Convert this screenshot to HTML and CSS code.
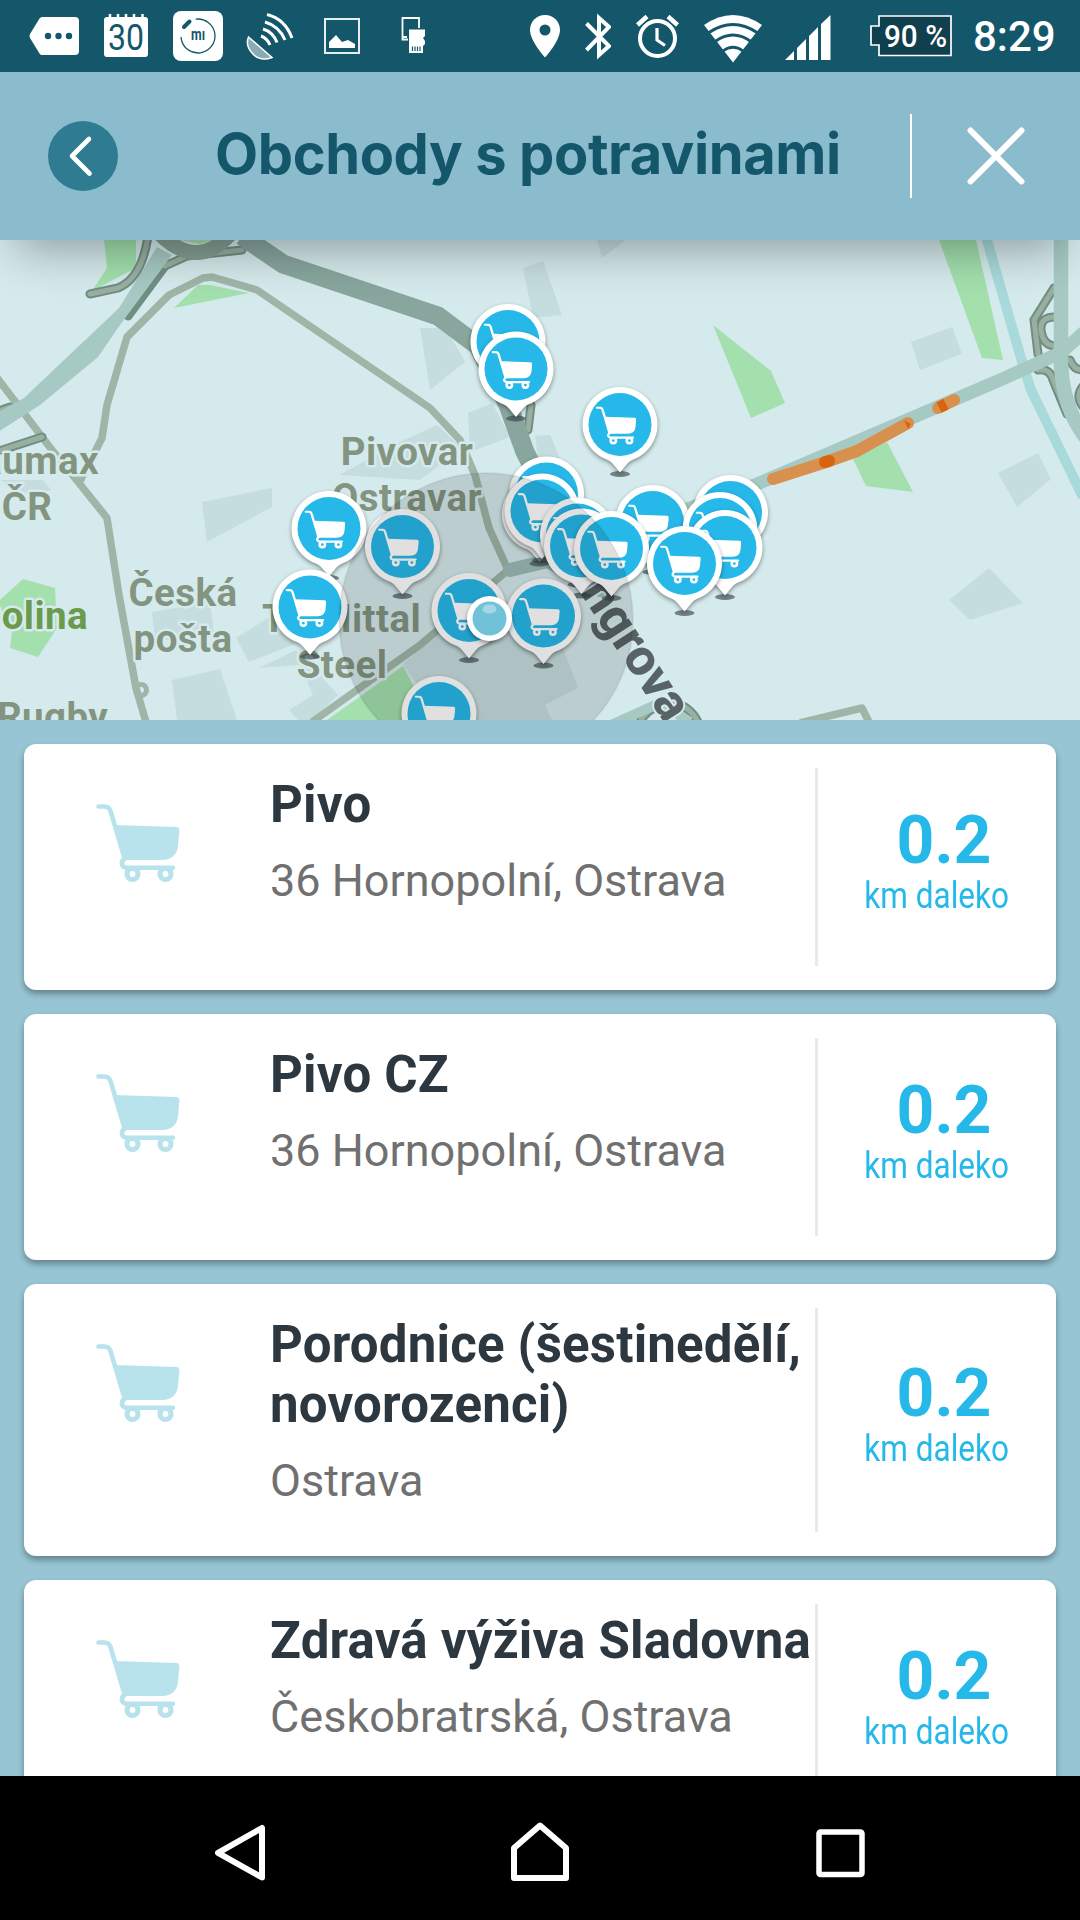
FILE: index.html
```html
<!DOCTYPE html>
<html lang="cs">
<head>
  <meta charset="UTF-8" />
  <title>Obchody s potravinami</title>
  <link rel="stylesheet" href="styles.css">
</head>
<body>

<!-- SHARED SHAPES -->
<svg class="defs" width="0" height="0">
  <defs>
    <symbol id="cart" viewBox="0 0 84 79">
      <path d="M2.5 2.5h6q4.500 0 6 4.500L28.500 54" fill="none" stroke="currentColor" stroke-width="4.600" stroke-linecap="round"/>
      <path d="M19 21L80 23q3.600.2 3.400 4L82 42q-1.500 13.500-16 14H28z" fill="currentColor"/>
      <path d="M29 54.500q-4.500 3-2.500 7 1.500 2.300 5 2.300H77" fill="none" stroke="currentColor" stroke-width="4.600" stroke-linecap="round"/>
      <circle cx="36.500" cy="70" r="5.500" fill="none" stroke="currentColor" stroke-width="5.200"/>
      <circle cx="69.500" cy="70" r="5.500" fill="none" stroke="currentColor" stroke-width="5.200"/>
    </symbol>
    <g id="pin">
      <ellipse cx="0" cy="49.500" rx="10" ry="3" fill="#3c4a50" opacity=".65"/>
      <path class="pin-body" d="M0 48L-7 39.500Q-9 36.800-12 35.500A37.500 37.500 0 1 1 12 35.500Q9 36.800 7 39.500Z" fill="#fff"/>
      <circle r="31.500" fill="#26b8e9"/>
      <use href="#cart" x="-24.500" y="-18" width="41" height="38.500" color="#fff"/>
    </g>
  </defs>
</svg>

<!-- STATUS BAR -->
<div class="status-bar">
  <div class="status-left">
    <svg width="50" height="72"><path d="M13 17H46q4 0 4 4V51q0 4-4 4H13q-1.500 0-2.500-1.600L1 38q-1-2 0-4L10.500 18.600Q11.500 17 13 17z" fill="#fff"/><g fill="#15576a"><circle cx="19" cy="36" r="3.200"/><circle cx="29.500" cy="36" r="3.200"/><circle cx="40" cy="36" r="3.200"/></g></svg>
    <svg width="44" height="72"><rect y="17" width="44" height="40" rx="3" fill="#fff"/><path d="M6 14v4M14 14v4M22 14v4M30 14v4M38.500 14v4" stroke="#fff" stroke-width="2.500"/><text class="cal-day" x="4" y="50" textLength="36" lengthAdjust="spacingAndGlyphs">30</text></svg>
    <svg width="50" height="72"><rect y="11" width="50" height="50" rx="8" fill="#fff"/><circle cx="25" cy="36" r="17" fill="none" stroke="#15576a" stroke-width="1.300" stroke-dasharray="81 12 8 6" transform="rotate(-98 25 36)"/><path d="M11 27L16.500 21.500" stroke="#15576a" stroke-width="4" stroke-linecap="round"/><text class="mi" x="18" y="40" textLength="14" lengthAdjust="spacingAndGlyphs">mı</text></svg>
    <svg width="48" height="72"><path d="M2.500 37L26 57.500Q14 62 6.500 53.500Q-1 46 2.500 37z" fill="#8aabb5" stroke="#fff" stroke-width="1.500"/><g fill="none" stroke="#fff" stroke-width="3"><path d="M15 36Q21 38 24 45"/><path d="M17 29Q27 32 31 42.500"/><path d="M19 22Q33 26 39 40"/><path d="M21 14.500Q39 19 46 38"/></g></svg>
    <svg width="36" height="72"><rect x="1" y="19" width="34" height="34" fill="none" stroke="#fff" stroke-width="1.800"/><path d="M5 48V42L12 35 18 42 24 40 31 44V48z" fill="#fff"/></svg>
    <svg width="26" height="72"><path d="M18 28V18H1.500V39.500H7M2 37H6" fill="none" stroke="#fff" stroke-width="1.800"/><path d="M8 29.500H24V36L22 38 24 41V44L22 46V53H8z" fill="#fff"/><path d="M11.500 46.500v4.500M14 46.500v4.500M16.500 46.500v4.500M19 46.500v4.500" stroke="#15576a" stroke-width="1.200"/></svg>
  </div>
  <div class="status-right">
    <svg width="30" height="72"><path d="M15 15C6 15 0 22 0 30C0 41 15 57.500 15 57.500S30 41 30 30C30 22 24 15 15 15z" fill="#fff"/><circle cx="15" cy="30" r="5.500" fill="#15576a"/></svg>
    <svg width="26" height="72"><path d="M1.500 23.500L24 46 14 55V18L24 27 1.500 50" fill="none" stroke="#fff" stroke-width="4"/></svg>
    <svg width="43" height="72"><circle cx="21.500" cy="38.500" r="17.500" fill="none" stroke="#fff" stroke-width="4"/><path d="M21 28V40L29 45.500" fill="none" stroke="#fff" stroke-width="3.200"/><path d="M1.500 25L11 16.500M41.500 25L32 16.500" stroke="#fff" stroke-width="4.400"/></svg>
    <svg width="58" height="72"><path d="M29 62.500L0 25Q29 5 58 25z" fill="#fff"/><g fill="none" stroke="#15576a" stroke-width="2.800"><path d="M5 32.500Q29 16.500 53 32.500"/><path d="M11 41.500Q29 28.500 47 41.500"/><path d="M19 51Q29 43.500 39 51"/></g></svg>
    <svg class="signal" width="46" height="72"><path d="M0 60L9 51V60zM12 60V48L21 39V60zM24 60V36L33 27V60zM36 60V24L45.500 15V60z" fill="#fff"/></svg>
    <svg class="battery" width="82" height="72"><path d="M9 16H81V55.500H9V45H1V26H9z" fill="#103f4d" stroke="#fff" stroke-width="1.700"/><text x="14" y="46.500" textLength="63" lengthAdjust="spacingAndGlyphs">90 %</text></svg>
    <span class="clock">8:29</span>
  </div>
</div>

<!-- HEADER -->
<div class="header">
  <div class="back-btn">
    <svg width="70" height="70"><path d="M41 18L24 35 41.500 52.500" fill="none" stroke="#fff" stroke-width="4.600" stroke-linecap="round" stroke-linejoin="round"/></svg>
  </div>
  <h1>Obchody s potravinami</h1>
  <div class="header-line"></div>
  <svg class="close-btn" width="58" height="58"><path d="M3.500 3.500L54.500 54.500M54.500 3.500L3.500 54.500" stroke="#fff" stroke-width="6" stroke-linecap="round"/></svg>
</div>

<!-- MAP -->
<svg class="map" width="1080" height="480" viewBox="0 0 1080 480">
  <g fill="#c6dddf">
    <path d="M523 28L543 21 562 75 533 78z"/>
    <path d="M420 88H446L465 122 430 150z"/>
    <path d="M468 173L492 163 510 197 470 212z"/>
    <path d="M339 235L400 202 437 185 462 208 420 240z"/>
    <path d="M202 262L272 248V267L207 302z"/>
    <path d="M0 240H43L51 250 30 255z"/>
    <path d="M152 372L210 362 214 392 180 402 155 398z"/>
    <path d="M236 398L268 378 300 402 249 422z"/>
    <path d="M259 428L296 410 338 455 312 480H298L289 470 313 455 300 425z"/>
    <path d="M172 440L220 429 237 480H177z"/>
    <path d="M403 424L440 392 520 360 560 400 578 448 545 465 552 480H440z"/>
    <path d="M597 0H626L602 18z"/>
    <path d="M911 102L952 87 962 114 920 130z"/>
    <path d="M998 233L1038 213 1051 239 1017 267z"/>
    <path d="M949 360L989 328 1023 363 970 380z"/>
    <path d="M535 196L550 195 560 218H538z"/>
  </g>
  <g fill="#a3e0ad">
    <path d="M104 0H136V28L92 51 107 28z"/>
    <path d="M178 0H212L200 4z"/>
    <path d="M198 45H210L249 53 174 68z"/>
    <path d="M23 339L55 348 57 388 38 417 10 408 12 392 0 382V360z"/>
    <path d="M327 480L403 426 413 445 450 480z"/>
    <path d="M713 85L771 131 785 163 751 178z"/>
    <path d="M939 0H976L1003 120 982 118z"/>
    <path d="M853 219L887 202 913 252 866 246z"/>
  </g>
  <path d="M986 -3L1023 125 1031 150 1083 257" fill="none" stroke="#a8dadb" stroke-width="10"/>

  <!-- minor roads -->
  <g fill="none" stroke="#9fb5a8" stroke-width="7.500" stroke-linejoin="round">
    <path d="M-5 135L52 210 79 243 107 278 119 355 136 448 146 482"/>
    <path d="M79 243L102 198 107 165 127 97 169 55 203 38 212 37 257 50 430 168 460 200 475 235 489 288 508 330 420 405 312 482"/>
    <circle cx="141" cy="450" r="5.500" stroke-width="5"/>
    <path d="M800 483L862 468 870 484"/>
  </g>

  <!-- ramps -->
  <path class="ramp" d="M128 76L165 26 187 16 242 10M-4 212L42 197M-4 172L10 167M1054 48L1034 80 1038 114M1055 77Q1040 77 1041 90 1043 106 1056 106M1038 130Q1050 128 1053 140L1067 174M1070 120Q1075 132 1084 129M1084 145Q1074 156 1084 168M531 165L528 190M640 482Q648 466 672 462 690 466 698 482"/>
  <path class="ramp-inner" d="M165 26L187 16 242 10M-4 212L42 197M-4 172L10 167M1054 48L1034 80 1038 114M1055 77Q1040 77 1041 90 1043 106 1056 106M1038 130Q1050 128 1053 140L1067 174M1070 120Q1075 132 1084 129M1084 145Q1074 156 1084 168M531 165L528 190M640 482Q648 466 672 462 690 466 698 482"/>

  <!-- highways -->
  <path d="M157 7L119 68 24 158-2 172V192L40 165 98 117 120 85 172 15z" fill="#a6c9c3"/>
  <path d="M600 490L660 463 690 482" fill="none" stroke="#a6c9c3" stroke-width="10"/>
  <path class="ramp" d="M90 54L118 48Q142 38 148 -4"/>
  <path class="ramp-inner" d="M90 54L118 48Q142 38 148 -4"/>
  <path d="M158 -8Q197 33 232 -8" fill="none" stroke="#849f94" stroke-width="15"/>
  <path d="M242 -4L283 24 438 76 478 106 508 165 525 212 555 270" fill="none" stroke="#88a69d" stroke-width="19" stroke-linejoin="round"/>
  <path d="M510 330L548 321 600 350" fill="none" stroke="#9bbdb6" stroke-width="14" stroke-linecap="round"/>
  <g fill="none" stroke="#a6c9c3" stroke-width="13" stroke-linejoin="round">
    <path d="M670 275L750 247 907 180 1000 140 1062 112 1084 92"/>
    <path d="M1061 -3V125Q1063 168 1086 198" stroke-width="14.500"/>
  </g>
  <g fill="none" stroke="#d8904f" stroke-width="12" stroke-linecap="round" stroke-linejoin="round">
    <path d="M773 239L826 222 857 211 908 183"/>
    <path d="M938 168L954 160"/>
    <path d="M825 222L829 221" stroke="#d9640f"/>
    <path d="M939 167.500L946 164" stroke="#d9640f" stroke-linecap="butt"/>
    <path d="M904 180L911 184 908 189z" fill="#d9640f" stroke="none"/>
  </g>

  <!-- labels -->
  <g class="map-label">
    <text x="99" y="234" text-anchor="end">Baumax</text>
    <text x="27" y="280" text-anchor="middle">ČR</text>
    <text x="407" y="225" text-anchor="middle">Pivovar</text>
    <text x="407" y="271" text-anchor="middle">Ostravar</text>
    <text x="183" y="366" text-anchor="middle">Česká</text>
    <text x="183" y="412" text-anchor="middle">pošta</text>
    <text x="262" y="392">T</text>
    <text x="421" y="392" text-anchor="end">Mittal</text>
    <text x="342" y="438" text-anchor="middle">Steel</text>
    <text x="-3" y="490">Rugby</text>
    <text class="park" x="88" y="389" text-anchor="end">Dolina</text>
  </g>
  <text class="street-label" transform="translate(554 313) rotate(57)">Cingrova</text>

  <!-- pins -->
  <g class="pins">
    <use href="#pin" x="508" y="101.500"/>
    <use href="#pin" x="516" y="129"/>
    <use href="#pin" x="620" y="184.500"/>
    <use href="#pin" x="546.500" y="254"/>
    <use href="#pin" x="539.500" y="274"/>
    <use href="#pin" x="542" y="271"/>
    <use href="#pin" x="652.500" y="282.500"/>
    <use href="#pin" x="577.500" y="295"/>
    <use href="#pin" x="581.500" y="306"/>
    <use href="#pin" x="730.500" y="272.500"/>
    <use href="#pin" x="720" y="289.500"/>
    <use href="#pin" x="725" y="307.500"/>
    <use href="#pin" x="611.500" y="308.500"/>
    <use href="#pin" x="684.500" y="323.500"/>
    <use href="#pin" x="329" y="288.500"/>
    <use href="#pin" x="402.500" y="306.500"/>
    <use href="#pin" x="310" y="367"/>
    <use href="#pin" x="469" y="370.500"/>
    <use href="#pin" x="543.500" y="376"/>
    <use href="#pin" x="439" y="473.500"/>
  </g>

  <!-- my position -->
  <circle cx="486" cy="380" r="147" fill="#000" fill-opacity=".12" stroke="#000" stroke-opacity=".06" stroke-width="2"/>
  <g class="position">
    <circle cx="489.500" cy="378.500" r="22.500" fill="#fff"/>
    <circle cx="489.500" cy="378.500" r="17" fill="#71c2d8"/>
    <ellipse cx="489.500" cy="369" rx="7" ry="4.500" fill="#a3d9e6"/>
  </g>
</svg>

<!-- RESULTS -->
<div class="list">
  <div class="card">
    <svg class="card-icon"><use href="#cart"/></svg>
    <div class="card-text">
      <h2>Pivo</h2>
      <p>36 Hornopolní, Ostrava</p>
    </div>
    <div class="distance">
      <span class="km">0.2</span>
      <span class="unit">km daleko</span>
    </div>
  </div>

  <div class="card">
    <svg class="card-icon"><use href="#cart"/></svg>
    <div class="card-text">
      <h2>Pivo CZ</h2>
      <p>36 Hornopolní, Ostrava</p>
    </div>
    <div class="distance">
      <span class="km">0.2</span>
      <span class="unit">km daleko</span>
    </div>
  </div>

  <div class="card">
    <svg class="card-icon"><use href="#cart"/></svg>
    <div class="card-text">
      <h2>Porodnice (šestinedělí, novorozenci)</h2>
      <p>Ostrava</p>
    </div>
    <div class="distance">
      <span class="km">0.2</span>
      <span class="unit">km daleko</span>
    </div>
  </div>

  <div class="card">
    <svg class="card-icon"><use href="#cart"/></svg>
    <div class="card-text">
      <h2>Zdravá výživa Sladovna</h2>
      <p>Českobratrská, Ostrava</p>
    </div>
    <div class="distance">
      <span class="km">0.2</span>
      <span class="unit">km daleko</span>
    </div>
  </div>
</div>

<!-- NAV BAR -->
<div class="nav-bar">
  <svg width="60" height="68"><path d="M52 14V63.500L8 38.800z" fill="none" stroke="#fff" stroke-width="6" stroke-linejoin="round"/></svg>
  <svg width="60" height="68"><path d="M4 64V34L30 11.500 56 34V64z" fill="none" stroke="#fff" stroke-width="6" stroke-linejoin="round"/></svg>
  <svg width="60" height="68"><rect x="9" y="18" width="43" height="42.500" rx="1.500" fill="none" stroke="#fff" stroke-width="5.500"/></svg>
</div>

</body>
</html>
```
FILE: styles.css
```css
body, html {
  margin: 0;
  padding: 0;
  width: 1080px;
  height: 1920px;
  overflow: hidden;
  font-family: Roboto, sans-serif;
}

body {
  display: flex;
  flex-direction: column;
  background: #97c5d4;
}

svg {
  display: block;
  flex: none;
}

.defs {
  position: absolute;
}

/* status bar */
.status-bar {
  display: flex;
  flex: none;
  justify-content: space-between;
  height: 72px;
  background: #15576a;
  color: white;
}

.status-left {
  display: grid;
  grid-template-columns: repeat(6, 72px);
  justify-items: center;
  padding-left: 18px;
}

.status-right {
  display: flex;
  gap: 25px;
  padding-right: 24px;
}

.signal {
  margin-left: -2px;
}

.battery {
  margin-left: 14px;
}

.battery text {
  font-size: 31px;
  font-weight: 500;
  fill: white;
}

.cal-day {
  font-size: 36px;
  font-weight: 400;
  fill: #15576a;
}

.mi {
  font-size: 16px;
  font-weight: 700;
  fill: #15576a;
}

.clock {
  margin-left: -4px;
  width: 83px;
  font-size: 42px;
  font-weight: 500;
  line-height: 74px;
  white-space: nowrap;
}

/* header */
.header {
  position: relative;
  z-index: 1;
  display: flex;
  flex: none;
  align-items: center;
  box-sizing: border-box;
  height: 168px;
  padding: 0 55px 0 48px;
  background: #8abccd;
  box-shadow: 0 26px 46px -16px rgba(0,0,0,0.33);
}

.back-btn {
  border-radius: 50%;
  background: #2f7b92;
}

.header h1 {
  flex: 1;
  margin: 0;
  padding: 0 0 5px 97px;
  font-family: Inter, sans-serif;
  font-size: 56px;
  font-weight: 700;
  letter-spacing: -0.4px;
  color: #15576a;
  white-space: nowrap;
}

.header-line {
  width: 2px;
  height: 84px;
  margin-right: 55px;
  background: white;
}

/* map */
.map {
  background: #d5eaec;
}

.map-label text {
  font-size: 38.500px;
  font-weight: 700;
  letter-spacing: 0.4px;
  fill: #839580;
  stroke: #d5eaec;
  stroke-width: 5px;
  stroke-linejoin: round;
  paint-order: stroke;
}

.map-label .park {
  fill: #6b9a4c;
}

.street-label {
  font-size: 51px;
  font-weight: 800;
  fill: #586366;
  stroke: #d5eaec;
  stroke-width: 4px;
  paint-order: stroke;
}

.ramp, .ramp-inner {
  fill: none;
  stroke: #6f8f83;
  stroke-width: 9px;
  stroke-linecap: round;
}

.ramp-inner {
  stroke: #9aafa1;
  stroke-width: 5px;
}

.pin-body, .position {
  filter: drop-shadow(0 2px 2px rgba(0,0,0,0.4));
}

/* results */
.list {
  display: flex;
  flex: 1;
  flex-direction: column;
  gap: 24px;
  min-height: 0;
  padding: 24px 24px 0;
  overflow: hidden;
}

.card {
  display: flex;
  flex: none;
  box-sizing: border-box;
  min-height: 246px;
  border-radius: 12px;
  background: white;
  box-shadow: 0 4px 6px rgba(0,0,0,0.33);
}

.card-icon {
  width: 84px;
  height: 79px;
  margin: 60px 66px 0 72px;
  color: #b8e3ec;
}

.card-text {
  flex: 1;
  padding: 31px 0 49px 24px;
}

.card-text h2 {
  margin: 0 0 19px;
  font-size: 51px;
  font-weight: 700;
  line-height: 60px;
  letter-spacing: 0.2px;
  color: #2c3740;
}

.card-text p {
  margin: 0;
  font-size: 45px;
  line-height: 53px;
  color: #707070;
}

.distance {
  display: flex;
  flex-direction: column;
  align-items: center;
  justify-content: center;
  box-sizing: border-box;
  width: 241px;
  margin: 24px 0;
  padding-bottom: 10px;
  border-left: 3px solid #e9e9e9;
  color: #26b8e9;
}

.km {
  padding-left: 14px;
  font-size: 66px;
  font-weight: 700;
  line-height: 68px;
}

.unit {
  font-size: 36px;
  line-height: 42px;
  white-space: nowrap;
  transform: scaleX(0.875);
}

/* nav bar */
.nav-bar {
  display: grid;
  flex: none;
  grid-template-columns: repeat(3, 300px);
  place-content: center;
  place-items: center;
  height: 144px;
  background: black;
}
```
